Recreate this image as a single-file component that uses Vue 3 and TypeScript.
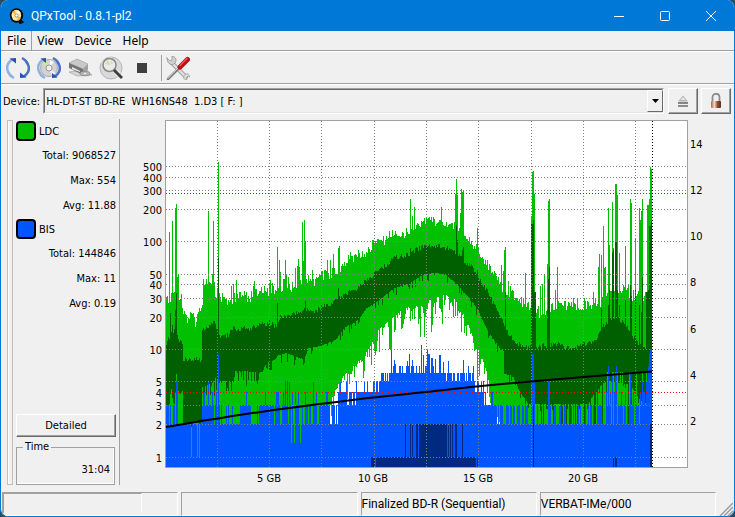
<script setup lang="ts">
type Pt = [number, number]

const menus = ['File', 'View', 'Device', 'Help']

const groups = [
  { name: 'LDC', color: 'green', rows: ['Total: 9068527', 'Max: 554', 'Avg: 11.88'] },
  { name: 'BIS', color: 'blue', rows: ['Total: 144846', 'Max: 11', 'Avg: 0.19'] },
]

// Parses "x,y x,y ..." into a list of points.
function pts(s: string): Pt[] {
  return s.trim().split(/\s+/).map((p) => p.split(',').map(Number) as Pt)
}

function lerp(list: Pt[], x: number): number {
  if (x <= list[0][0]) return list[0][1]
  for (let i = 1; i < list.length; i++) {
    const [x1, y1] = list[i]
    if (x <= x1) {
      const [x0, y0] = list[i - 1]
      return y0 + ((y1 - y0) * (x - x0)) / (x1 - x0)
    }
  }
  return list[list.length - 1][1]
}

let seed = 7
function rnd(): number {
  seed = (seed * 1103515245 + 12345) % 2147483648
  return seed / 2147483648
}

const LEFT = 166
const LAST = 652
const FLOOR = 467

function column(x: number, top: number, bottom: number, w = 1): string {
  return bottom > top ? `M${x} ${top}h${w}V${bottom}h${-w}z` : ''
}

function spikeMap(s: string): Map<number, number> {
  return new Map(pts(s))
}

const maxTop = pts(`166,301 175,299 181,300 183,316 186,320 192,320 195,327 198,320 202,304 203,285 209,290 215,295
 219,299 226,303 232,301 240,300 250,300 256,293 262,294 272,292 277,290 288,289 300,288 315,283 320,279 330,277 340,272
 348,261 358,258 366,255 374,245 384,242 394,236 404,235 412,230 420,228 426,222 436,223 446,226 458,231 464,240
 472,245 480,260 488,267 498,281 506,297 518,301 528,311 540,315 550,311 570,307 584,308 598,307 610,290 620,291
 632,299 645,300 651,299`)
const maxSpikes = spikeMap(`169,232 172,221 175,208 176,204 177,277 178,274 203,279 208,211 209,282 212,274 213,221
 214,282 218,162 231,286 233,284 236,280 253,286 254,281 261,287 264,286 269,283 270,280 277,247 279,260 280,272 283,279
 284,279 285,260 286,275 288,277 295,268 297,266 298,259 299,267 300,280 302,222 303,261 304,220 305,241 308,275 312,270
 316,277 327,260 330,260 333,254 338,248 339,246 348,255 351,256 358,250 372,240 374,243 376,243 380,240 386,236 389,231
 392,230 406,228 410,199 412,216 414,207 417,223 441,207 454,222 455,194 456,179 457,195 460,213 461,189 462,192 463,191
 477,228 476,244 478,247 501,265 503,271 504,250 505,247 508,281 510,286 525,273 531,216 532,172 533,171 534,194 540,286
 542,284 544,275 547,264 548,201 549,199 555,290 557,267 564,301 573,298 577,298 584,298 593,292 598,267 599,254
 601,255 603,226 604,268 605,267 608,208 609,245 612,202 613,248 615,184 616,184 617,195 619,253 625,246 628,284
 630,199 631,203 635,239 639,208 640,220 641,211 642,199 647,205 648,205 649,199 650,167 651,169`)

const maxBottom = pts(`166,424 318,424 319,405 330,405 339,385 345,378 352,368 362,362 367,354 374,340 380,331 390,324
 400,315 406,311 420,310 430,303 440,300 450,298 456,304 464,319 470,334 474,345 480,356 486,375 490,393 496,415 500,424 652,424`)
const avgTop = pts(`166,344 170,335 174,331 177,335 179,342 182,342 183,360 201,360 202,331 208,326 213,322 217,329
 219,336 228,336 232,329 240,330 244,328 250,330 255,326 266,325 269,323 276,327 279,318 288,315 297,314 305,309 316,311
 322,307 330,305 337,300 346,294 356,290 366,281 374,274 384,267 394,258 404,257 412,252 422,247 434,246 446,248
 458,255 464,262 472,268 480,281 488,294 496,310 506,330 514,342 524,347 534,349 548,345 560,345 572,350 582,345
 596,341 600,330 608,322 616,318 624,324 632,337 640,345 646,352 652,345`)
const avgSpikes = spikeMap(`170,313 172,325 175,310 176,293 201,360 218,258 277,303 305,301 338,288 410,248 456,225 457,240
 463,247 462,250 477,270 505,292 532,224 531,224 533,220 534,292 535,292 547,310 548,279 549,267 601,308 608,305 609,290
 612,253 613,250 615,242 616,242 617,290 619,305 625,300 630,285 631,296 635,290 639,305 642,277 641,312 646,292 647,292
 648,290 649,226 650,226 651,221`)
const avgBottom = pts(`166,424 169,405 171,385 174,405 176,375 178,392 180,395 182,392 183,424 201,424 202,388 210,385
 216,378 219,382 233,383 235,372 262,373 266,363 274,361 278,356 286,354 296,358 304,360 308,349 320,347 330,343 336,340
 344,328 354,324 360,318 366,309 376,303 384,297 394,289 404,286 414,281 424,275 436,274 446,276 456,285 466,296 476,308
 484,325 490,336 500,350 503,352 504,375 513,377 519,392 528,405 588,405 596,390 606,382 620,384 630,386 640,402 652,405`)

// Columns where LDC stays visible down to its lowest level.
const deepColumns = [191, 197, 199, 291, 294, 300]

// Upper edge of BIS, moving in whole-number levels of the log scale.
const levels = [0, 457, 424, 405, 392, 381, 373, 366]
const bisZones: { to: number; mix: number[] }[] = [
  { to: 170, mix: [2, 2, 3] },
  { to: 176, mix: [2, 3] },
  { to: 203, mix: [2, 2, 2, 2, 2, 2, 3] },
  { to: 220, mix: [3, 2, 3, 3, 4] },
  { to: 240, mix: [2, 3, 2] },
  { to: 250, mix: [3] },
  { to: 260, mix: [2, 2, 3] },
  { to: 276, mix: [3, 3, 3, 2] },
  { to: 310, mix: [3, 3, 2, 4, 3, 2] },
  { to: 338, mix: [3, 2, 3, 3, 4] },
  { to: 356, mix: [4, 3, 4, 5, 4] },
  { to: 372, mix: [4, 5, 4] },
  { to: 381, mix: [5, 5, 4] },
  { to: 408, mix: [6, 6, 7, 6, 5] },
  { to: 425, mix: [6, 7, 7, 6] },
  { to: 440, mix: [7, 7, 7, 6] },
  { to: 475, mix: [6, 6, 6, 7, 5, 6] },
  { to: 484, mix: [4, 4, 4, 5] },
  { to: 497, mix: [4, 3, 3] },
  { to: 531, mix: [3, 3, 2, 2] },
  { to: 598, mix: [2, 3, 2, 2, 3] },
  { to: 606, mix: [3, 2, 3] },
  { to: 632, mix: [3, 3, 4, 3, 2] },
  { to: 646, mix: [3, 3, 2, 4] },
  { to: 652, mix: [5] },
]
const bisSpikes = spikeMap(`191,457 197,457 199,457 291,443 294,443 300,443
 176,381 177,381 208,381 212,392 216,392 218,354 246,392 265,392 276,392 278,392 285,381 289,381
 287,381 313,381 391,349 394,360 395,364 407,361 409,354 412,360 421,345 423,355 427,350 428,354 429,354 431,358
 432,358 435,359 439,355 440,355 443,362 448,361 463,360 532,354 533,354 534,381 531,381 548,381 549,381 608,366
 616,366 612,374 615,374 630,374 642,381 648,366 649,354 650,349 651,349`)

let lightPath = ''
let darkPath = ''
let bluePath = ''
let zone = 0
for (let x = LEFT; x < LAST; x++) {
  const middle = x > 350 && x < 500
  const jitter = middle ? 9 : 12
  const top = Math.round(maxSpikes.get(x) ?? lerp(maxTop, x) + 3 - rnd() * jitter)
  let low = lerp(maxBottom, x)
  if (x > 330 && x < 495) low += rnd() ** 3 * 34 - 4
  if (deepColumns.includes(x)) low = 457
  low = Math.round(Math.min(low, FLOOR))
  lightPath += column(x, top, low)

  const aTop = Math.round(avgSpikes.get(x) ?? lerp(avgTop, x) + 2 - rnd() * 5)
  let aLow = lerp(avgBottom, x) + (rnd() < 0.3 ? rnd() * 8 : 0) - 1
  if (x > 527 && rnd() < 0.2) aLow = 424
  if (x > 600 && rnd() < 0.25) aLow = 372
  if (x > 202 && x < 300 && rnd() < 0.2) aLow += 9
  darkPath += column(x, aTop, Math.round(Math.min(aLow, low)))

  while (x >= bisZones[zone].to) zone++
  const mix = bisZones[zone].mix
  const b = bisSpikes.get(x) ?? levels[mix[Math.floor(rnd() * mix.length)]]
  bluePath += column(x, b, FLOOR)
}

const navyPath = [
  column(371, 457, FLOOR, 4), column(376, 457, FLOOR, 100),
  ...[405, 410, 412].map((x) => column(x, 424, 457)),
  column(416, 424, 457, 2), column(419, 424, 457, 28),
  ...[448, 450, 452, 462].map((x) => column(x, 424, 457)),
  column(455, 424, 457, 2), column(477, 457, FLOOR),
  column(533, 405, FLOOR), column(613, 457, FLOOR), column(615, 457, FLOOR, 2),
  column(650, 424, FLOOR, 2),
].join('')

const gridX = [217, 269, 321, 374, 426, 478, 531, 583, 635]
const gridY = [166, 177, 190, 209, 241, 274, 284, 298, 317, 349, 381, 405, 424, 457]
const leftLabels: [string, number][] = [
  ['500', 166], ['400', 177], ['300', 190], ['200', 209], ['100', 241], ['50', 274], ['40', 284],
  ['30', 298], ['20', 317], ['10', 349], ['5', 381], ['4', 392], ['3', 405], ['2', 424], ['1', 457],
]
const rightLabels: [string, number][] = [
  ['14', 144], ['12', 190], ['10', 236], ['8', 282], ['6', 329], ['4', 375], ['2', 421],
]
const bottomLabels: [string, number][] = [['5 GB', 269], ['10 GB', 373], ['15 GB', 478], ['20 GB', 583]]
</script>

<template>
  <div class="window">
    <header class="titlebar">
      <svg class="logo" width="16" height="16" viewBox="0 0 16 16" aria-hidden="true">
        <ellipse cx="7.5" cy="7.5" rx="6.7" ry="7.3" fill="#080808" />
        <path d="M9 10l5 4-3 1.500z" fill="#080808" stroke="#080808" stroke-width="1.500" />
        <ellipse cx="7.300" cy="7.300" rx="4.800" ry="5.500" fill="#ffe9a0" />
        <path d="M7 7L3 4 6 2zM8 8l4 2-3 3z" fill="#ffb02e" />
        <path d="M7 7l2-5 3 3z" fill="#fffbe8" />
        <circle cx="7.500" cy="7.500" r="1.600" fill="#fff" stroke="#777" stroke-width=".7" />
      </svg>
      <h1>QPxTool - 0.8.1-pl2</h1>
      <div class="controls">
        <button type="button" aria-label="Minimize">
          <svg width="12" height="12" viewBox="0 0 12 12"><path d="M1 6.500h10" /></svg>
        </button>
        <button type="button" aria-label="Maximize">
          <svg width="12" height="12" viewBox="0 0 12 12"><rect x="1.500" y="1.500" width="9" height="9" rx="1" /></svg>
        </button>
        <button type="button" aria-label="Close">
          <svg width="12" height="12" viewBox="0 0 12 12"><path d="M1 1l10 10M11 1L1 11" /></svg>
        </button>
      </div>
    </header>

    <nav class="menubar">
      <button v-for="m in menus" :key="m" type="button" :class="{ active: m === 'File' }">{{ m }}</button>
    </nav>

    <div class="toolbar">
      <button type="button" aria-label="Rescan bus">
        <svg width="24" height="24" viewBox="0 0 24 24" fill="none">
          <path d="M6 3.500C1.500 7 0 11 2 15.500c1 3 3 5 6 6.500" stroke="#8fb2e4" stroke-width="2.500" />
          <path d="M18 20.500c4.500-3.500 6-7.500 4-12-1-3-3-5-6-6.500" stroke="#4a72c4" stroke-width="2.500" />
          <path d="M3.500 2.500L10 2v5.500z" fill="#2b52a8" /><path d="M20.500 21.500L14 22v-5.500z" fill="#2b52a8" />
        </svg>
      </button>
      <button type="button" aria-label="Rescan media">
        <svg width="24" height="24" viewBox="0 0 24 24" fill="none">
          <circle cx="12" cy="12" r="8.500" fill="#d2d2d2" stroke="#aaa" />
          <path d="M12 12L5 7l4-3z" fill="#c9e5a5" /><path d="M12 12l7 5-4 3z" fill="#eee" /><path d="M12 12l1-8 4 2z" fill="#f7f7f7" />
          <circle cx="12" cy="12" r="3" fill="#eee" stroke="#999" />
          <path d="M6 3.500C1.500 7 0 11 2 15.500c1 3 3 5 6 6.500" stroke="#8fb2e4" stroke-width="2.500" />
          <path d="M18 20.500c4.500-3.500 6-7.500 4-12-1-3-3-5-6-6.500" stroke="#4a72c4" stroke-width="2.500" />
          <path d="M3.500 2.500L9 2v5z" fill="#2b52a8" /><path d="M20.500 21.500L15 22v-5z" fill="#2b52a8" />
        </svg>
      </button>
      <button type="button" aria-label="Device info">
        <svg width="24" height="24" viewBox="0 0 24 24">
          <path d="M1 16l8 4 15-1-8-5z" fill="#d5d5d5" stroke="#999" stroke-width=".6" />
          <path d="M1 7l8-4 11 5-5 5z" fill="#c9c9c9" stroke="#999" stroke-width=".6" />
          <path d="M1 7l14 6v6L1 12z" fill="#747474" /><path d="M15 13l5-5v6l-5 5z" fill="#a2a2a2" />
          <path d="M4 11l8 4v1l-8-3z" fill="#eee" />
          <ellipse cx="17" cy="17.500" rx="5" ry="2.300" fill="#b4b4b4" stroke="#777" stroke-width=".6" />
          <ellipse cx="17" cy="17.500" rx="1.300" ry=".7" fill="#eee" />
        </svg>
      </button>
      <button type="button" aria-label="Scan media">
        <svg width="24" height="24" viewBox="0 0 24 24" fill="none">
          <circle cx="12" cy="12" r="11" fill="#d9d9d9" stroke="#b5b5b5" />
          <path d="M12 12L2 7l4-4z" fill="#d9ecc2" /><path d="M12 12L8 2l5-1z" fill="#f8dfc1" /><path d="M12 12l10 4-4 5z" fill="#f5f5f5" />
          <circle cx="10.500" cy="9" r="6.500" fill="#ededed" fill-opacity=".8" stroke="#888" stroke-width="1.500" />
          <path d="M6 8l3-4 2 5z" fill="#c5e2b0" /><path d="M10 9l2-5 3 3z" fill="#f5d5b0" />
          <path d="M15 14l8 8" stroke="#3e3e3e" stroke-width="3" />
        </svg>
      </button>
      <button type="button" aria-label="Stop">
        <svg width="24" height="24" viewBox="0 0 24 24"><path d="M7 7h10v10H7z" fill="#3f3f3f" /></svg>
      </button>
      <span class="divider"></span>
      <button type="button" aria-label="Preferences">
        <svg width="24" height="24" viewBox="0 0 24 24" fill="none" stroke-linecap="round">
          <path d="M6 7l14 14" stroke="#8e8e8e" stroke-width="4" /><path d="M6 7l14 14" stroke="#dedede" stroke-width="2.500" />
          <path d="M1 2l3 3 2-1V0c4 1 5 4 3 7-2 3-8 2-8-5z" fill="#cfcfcf" stroke="#8b8b8b" stroke-width=".7" />
          <path d="M20 18c2-1 4 1 4 3l-2-1-2 2 1 2c-3 0-4-2-3-4z" fill="#ddd" stroke="#999" stroke-width=".7" />
          <path d="M2 23L13 12" stroke="#777" stroke-width="2.500" /><path d="M2 22.500L12 12" stroke="#ddd" />
          <path d="M14 11l7.500-7.500" stroke="#b5121a" stroke-width="5" /><path d="M14 9.500l7-7" stroke="#ee535b" stroke-width="1.500" />
        </svg>
      </button>
    </div>

    <div class="device-row">
      <label for="device">Device:</label>
      <div class="combo">
        <select id="device">
          <option>HL-DT-ST BD-RE&nbsp; WH16NS48&nbsp; 1.D3 [ F: ]</option>
        </select>
        <span class="arrow"><svg width="7" height="4" viewBox="0 0 7 4"><path d="M0 0h7L3.500 4z" /></svg></span>
      </div>
      <button class="raised" type="button" aria-label="Eject">
        <svg width="16" height="16" viewBox="0 0 16 16">
          <path d="M8 2.500L13 8.500H3z" fill="#b4b4b4" /><path d="M8 4l2.500 3h-5z" fill="#e6e6e6" />
          <path d="M3 9h10v2H3z" fill="#858585" /><path d="M3 12h10v2H3z" fill="#8c8c8c" />
        </svg>
      </button>
      <button class="raised" type="button" aria-label="Lock">
        <svg width="16" height="16" viewBox="0 0 16 16">
          <defs>
            <linearGradient id="lockBody"><stop offset="0" stop-color="#a5694b" /><stop offset=".35" stop-color="#f2d5bd" /><stop offset=".65" stop-color="#8e5030" /><stop offset="1" stop-color="#5c2c17" /></linearGradient>
          </defs>
          <path d="M4.500 8V4.500c0-5 7-5 7 0V8" fill="none" stroke="#8b8b8b" stroke-width="1.800" />
          <rect x="3" y="8" width="10" height="7" rx="1" fill="url(#lockBody)" />
        </svg>
      </button>
    </div>

    <main class="main">
      <div class="grip"></div>
      <aside class="side">
        <section v-for="g in groups" :key="g.name" class="stat">
          <div class="head"><i class="swatch" :class="g.color"></i><span>{{ g.name }}</span></div>
          <p v-for="r in g.rows" :key="r">{{ r }}</p>
        </section>
        <button type="button" class="raised detailed">Detailed</button>
        <fieldset>
          <legend>Time</legend>
          <output>31:04</output>
        </fieldset>
      </aside>
      <svg class="chart" viewBox="124 120 610 365" role="img" aria-label="LDC and BIS error chart">
        <rect x="165" y="120" width="523" height="348" fill="#a0a0a0" />
        <rect x="166" y="121" width="521" height="346" fill="#fff" />
        <g shape-rendering="crispEdges">
          <path :d="lightPath" fill="#00c000" />
          <path :d="darkPath" fill="#006000" />
          <path :d="bluePath" fill="#0055ff" />
          <path :d="navyPath" fill="#002a80" />
          <g stroke="#808080" stroke-dasharray="1 2">
            <path v-for="y in gridY" :key="y" :d="`M166 ${y + 0.5}H687`" />
            <path v-for="x in gridX" :key="x" :d="`M${x + 0.5} 121V467`" />
          </g>
          <path d="M166 193.500H687M166 392.500H687" stroke="#f00" stroke-dasharray="1 2" />
          <path d="M652.500 121V467" stroke="#000" stroke-dasharray="1 2" />
        </g>
        <path
          d="M166 427C184 424 200 421 218 418.500C240 415 265 411 289 408C320 404 350 400 374 397.500C400 395 425 392 440 390.500C470 387 500 384 531 381.500C570 378 615 374.500 652 371.500"
          fill="none" stroke="#000" stroke-width="2" />
        <g class="axis">
          <text v-for="l in leftLabels" :key="l[1]" x="162" :y="l[1] + 5" text-anchor="end">{{ l[0] }}</text>
          <text v-for="l in rightLabels" :key="l[1]" x="690" :y="l[1] + 4">{{ l[0] }}</text>
          <text v-for="l in bottomLabels" :key="l[1]" :x="l[1]" y="482" text-anchor="middle">{{ l[0] }}</text>
        </g>
      </svg>
    </main>

    <footer class="status">
      <div class="cell"><div class="progress"></div></div>
      <div class="cell"></div>
      <div class="cell">Finalized BD-R (Sequential)</div>
      <div class="cell">VERBAT-IMe/000</div>
      <svg class="sizer" width="14" height="14" viewBox="0 0 14 14" aria-hidden="true">
        <path d="M1 14L14 1M5 14l9-9M9 14l5-5" stroke="#a0a0a0" stroke-width="1.500" />
      </svg>
    </footer>
  </div>
</template>

<style>
body {
  background: #2b4a5c;
}
</style>

<style scoped>
.window {
  display: flex;
  flex-direction: column;
  min-height: 100vh;
  box-sizing: border-box;
  border: 1px solid #0078d7;
  border-top: 0;
  border-radius: 8px;
  overflow: hidden;
  background: #f0f0f0;
  color: #000;
  font: 11px/16px "DejaVu Sans Condensed", "Noto Sans", sans-serif;
}
button, select {
  font: inherit;
  color: inherit;
  border: 0;
  border-radius: 0;
  padding: 0;
  margin: 0;
  background: none;
}
.titlebar {
  display: flex;
  align-items: center;
  height: 31px;
  padding-left: 8px;
  background: #0078d7;
  color: #fff;
}
h1 {
  flex: 1;
  margin: 0 0 0 6px;
  font: 12px/16px Roboto, "Open Sans", sans-serif;
}
.controls {
  display: flex;
}
.controls button {
  width: 46px;
  height: 31px;
  display: grid;
  place-items: center;
}
.controls svg {
  fill: none;
  stroke: #fff;
}
.menubar {
  display: flex;
  height: 19px;
  border-bottom: 1px solid #a0a0a0;
  font: 12px/18px "Noto Sans", sans-serif;
}
.menubar button {
  padding: 0 5px;
  border-right: 1px solid transparent;
}
.menubar .active {
  padding: 0 5px 0 6px;
  border-right: 1px solid #a0a0a0;
}
.toolbar {
  display: flex;
  align-items: center;
  gap: 7px;
  height: 33px;
  box-sizing: border-box;
  padding-left: 5px;
  border-top: 1px solid #fff;
  border-bottom: 1px solid #a0a0a0;
}
.toolbar button, .toolbar svg {
  display: block;
}
.divider {
  width: 1px;
  height: 26px;
  background: #a0a0a0;
  margin: 0 -3px 0 0;
}
.device-row {
  display: flex;
  align-items: center;
  gap: 3px;
  height: 35px;
  box-sizing: border-box;
  padding: 3px 3px 5px 2px;
  border-top: 1px solid #fff;
}
.device-row label {
  padding-top: 2px;
}
.combo {
  flex: 1;
  position: relative;
  height: 26px;
  box-sizing: border-box;
  margin-right: 1px;
  border: 1px solid;
  border-color: #a0a0a0 #fff #fff #a0a0a0;
}
.combo select {
  appearance: none;
  width: 100%;
  height: 24px;
  padding: 2px 0 0 1px;
  border: 1px solid;
  border-color: #696969 #e3e3e3 #e3e3e3 #696969;
}
.arrow {
  position: absolute;
  top: 1px;
  right: 0;
  width: 14px;
  height: 20px;
  display: grid;
  place-items: center;
  pointer-events: none;
  background: #f0f0f0;
  border: 1px solid;
  border-color: #fff #696969 #696969 #fff;
}
.raised {
  border: 1px solid;
  border-color: #fff #696969 #696969 #fff;
  box-shadow: inset -1px -1px #a0a0a0;
}
.device-row .raised {
  width: 30px;
  height: 26px;
  display: grid;
  place-items: center;
}
.main {
  display: flex;
  flex: 1;
  align-items: flex-start;
  padding: 0 0 0 6px;
}
.grip {
  align-self: stretch;
  width: 4px;
  margin: 1px 3px 0 0;
  border: 1px solid #c0c0c0;
  box-shadow: inset 1px 0 #fff;
}
.side {
  align-self: stretch;
  display: flex;
  flex-direction: column;
  width: 103px;
  border-right: 1px solid #a0a0a0;
  margin-right: 4px;
}
.stat .head {
  display: flex;
  align-items: center;
  gap: 3px;
  height: 23px;
}
.head span {
  padding-top: 2px;
}
.swatch {
  width: 16px;
  height: 16px;
  border: 2px solid #000;
  border-radius: 4px;
}
.green {
  background: #00c000;
}
.blue {
  background: #0055ff;
}
.stat p {
  margin: 0 3px 0 0;
  padding-top: 2px;
  line-height: 23px;
  text-align: right;
}
.detailed {
  width: 100px;
  height: 23px;
  margin-top: auto;
}
fieldset {
  width: 99px;
  height: 46px;
  box-sizing: border-box;
  margin: 2px 0 0;
  padding: 7px 4px;
  border: 1px solid #a0a0a0;
  box-shadow: inset -1px -1px #fff;
  min-width: 0;
}
legend {
  padding: 0 2px;
  margin-left: 2px;
}
output {
  display: block;
  text-align: right;
}
.chart {
  flex: 1;
  min-width: 0;
  display: block;
  margin-top: 1px;
}
.axis {
  font: 11px "DejaVu Sans Condensed", "Noto Sans", sans-serif;
}
.status {
  display: grid;
  grid-template-columns: repeat(4, 1fr) 15px;
  gap: 3px;
  height: 22px;
  padding: 0 0 2px 1px;
  margin-top: 7px;
  font: 12px/22px Roboto, "Noto Sans", sans-serif;
}
.cell {
  min-width: 0;
  white-space: nowrap;
  border: 1px solid;
  border-color: #a0a0a0 #fff #fff #a0a0a0;
}
.progress {
  width: 137px;
  max-width: 100%;
  height: 19px;
  border-top: 1px solid #a0a0a0;
  border-left: 1px solid #a0a0a0;
  border-right: 1px solid #fff;
}
.sizer {
  align-self: end;
}
</style>
